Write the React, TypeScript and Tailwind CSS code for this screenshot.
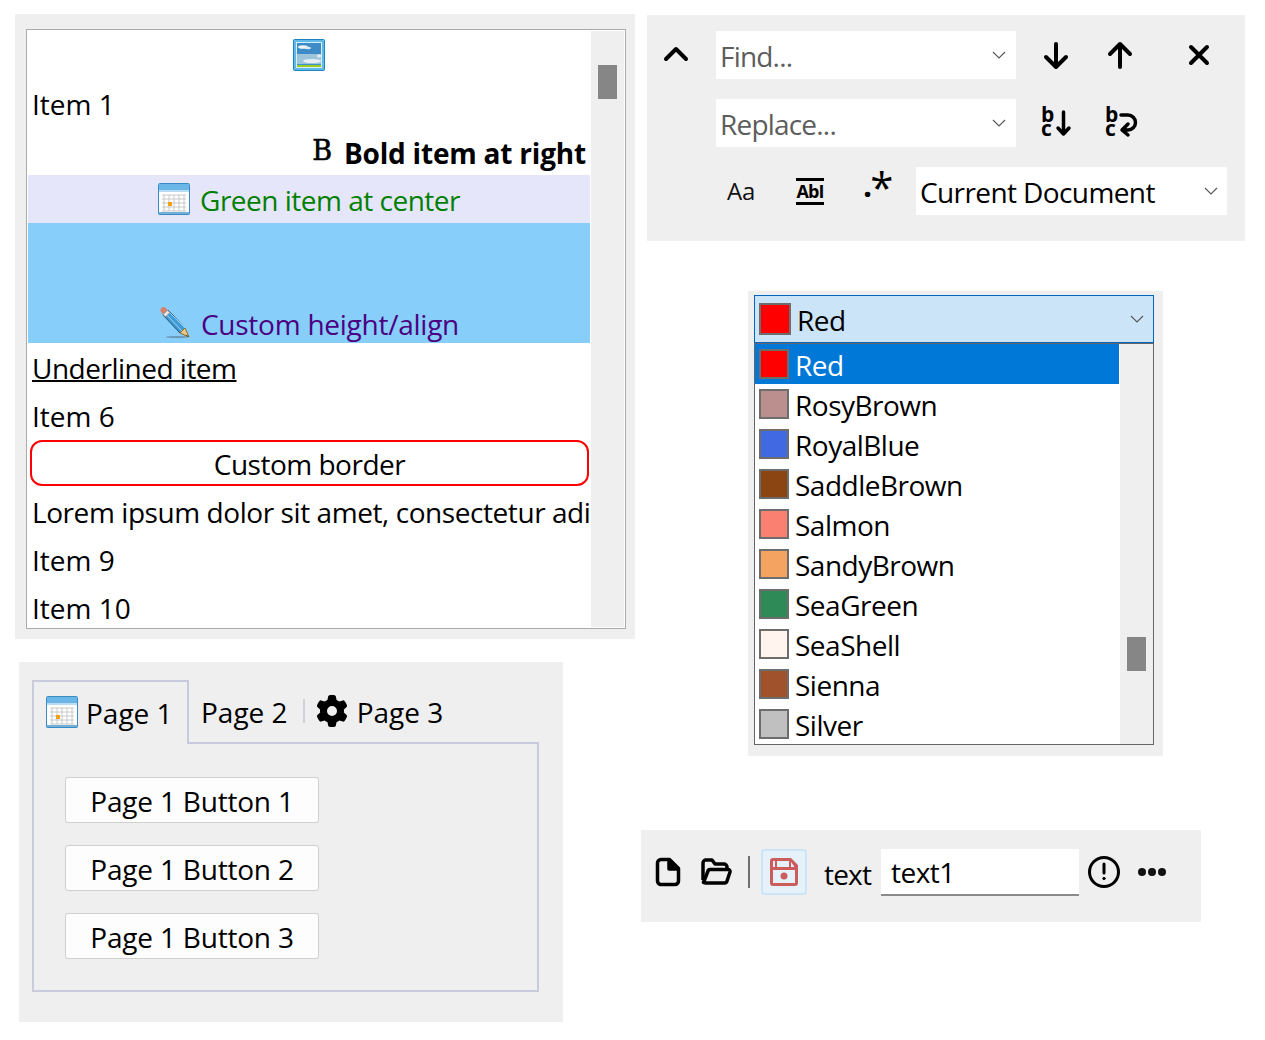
import { FaGear } from "react-icons/fa6";

const font = "[font-family:'Open_Sans','Noto_Sans',sans-serif]";

function Chevron({ className = "" }: { className?: string }) {
  return (
    <svg width="14" height="8" viewBox="0 0 14 8" fill="none" stroke="#555" strokeWidth="1.1" className={className}>
      <path d="M1 1l6 6 6-6" />
    </svg>
  );
}

function SkyIcon() {
  return (
    <svg width="32" height="32" viewBox="0 0 32 32">
      <rect x="0.5" y="0.5" width="31" height="31" rx="1" fill="#62b8e6" stroke="#1c84c0" />
      <rect x="3.500" y="3.500" width="25" height="25" fill="#3f94d0" stroke="#d6eef9" />
      <rect x="4" y="4" width="24" height="11" fill="#3d8cc8" />
      <rect x="4" y="15" width="24" height="10" fill="#9ec4dc" />
      <ellipse cx="10" cy="8" rx="5" ry="1.800" fill="#eef5f9" />
      <ellipse cx="15" cy="9" rx="3" ry="1.200" fill="#d8e8f2" />
      <ellipse cx="19" cy="22" rx="9" ry="2" fill="#e6eef3" />
      <ellipse cx="26" cy="17" rx="2" ry="1.500" fill="#e6eef3" />
      <rect x="4" y="26" width="24" height="2" fill="#9ccc1c" />
    </svg>
  );
}

function CalendarIcon() {
  return (
    <svg width="32" height="32" viewBox="0 0 32 32">
      <rect x="0.5" y="0.5" width="31" height="31" rx="1" fill="#fff" stroke="#3a8cc4" />
      <rect x="1" y="1" width="30" height="6" fill="#6ab6e6" />
      <rect x="1" y="7" width="30" height="2" fill="#b8dcf2" />
      <path d="M4 12h24M4 16h24M4 20h24M4 24h24M4 28h24M6 12v16M11 12v16M16 12v16M21 12v16M26 12v16" stroke="#c8c8c8" strokeWidth="1" />
      <rect x="10" y="19" width="4" height="4" fill="#f0a010" />
      <rect x="0.5" y="29" width="31" height="2.500" fill="#3a8cc4" opacity="0.7" />
    </svg>
  );
}

function PencilIcon() {
  return (
    <svg width="32" height="32" viewBox="0 0 32 32" className="mb-[5px]">
      <ellipse cx="18" cy="31" rx="11" ry="1" fill="#5d7f98" opacity="0.7" />
      <path d="M4 9l5-5 17 18-5 5z" fill="#3f9bd8" stroke="#24516f" strokeWidth="1" />
      <path d="M8 9l15 16M11 7l15 15" stroke="#9fd4f4" strokeWidth="1" />
      <path d="M21 27l5-5 4 9z" fill="#eec788" stroke="#8a6a30" strokeWidth="1" />
      <path d="M28 29l1.500 1.800-2.500-.800z" fill="#333" />
      <path d="M2.500 6.500a3 3 0 0 1 4-4.500l2 2-4.500 4.500z" fill="#d98068" />
      <path d="M4 8.500l4.500-4.500 2.500 2.500-4.500 4.500z" fill="#e8e8e8" stroke="#777" strokeWidth="0.7" />
    </svg>
  );
}

function ToolbarGlyph({ d }: { d: string }) {
  return (
    <svg width="32" height="32" viewBox="0 0 32 32" fill="none" stroke="#000" strokeWidth="4" strokeLinecap="round" strokeLinejoin="round">
      <path d={d} />
    </svg>
  );
}

function BcGlyph({ d }: { d: string }) {
  return (
    <div className="relative w-8 h-8 tracking-normal">
      <span className="absolute left-[1px] top-0 text-[21px] leading-[14px] font-bold">b</span>
      <span className="absolute left-[1px] top-[14px] text-[21px] leading-[14px] font-bold">c</span>
      <svg className="absolute inset-0 overflow-visible" width="32" height="32" viewBox="0 0 32 32" fill="none" stroke="#000" strokeWidth="3.500" strokeLinecap="round" strokeLinejoin="round">
        <path d={d} />
      </svg>
    </div>
  );
}

function ListRow({ className = "", children }: { className?: string; children: React.ReactNode }) {
  return <div className={`h-12 shrink-0 whitespace-nowrap overflow-hidden flex items-center pl-1 pt-[2px] ${className}`}>{children}</div>;
}

function ListPanel() {
  return (
    <div className="w-[620px] h-[625px] bg-[#efefef] pt-[15px] pl-[11px]">
      <div className="w-[600px] h-[600px] border border-[#ababab] bg-white p-px flex overflow-hidden">
        <div className="w-[562px] shrink-0 flex flex-col overflow-hidden">
          <ListRow className="justify-center !pl-0 !pt-0 pb-[1px]">
            <SkyIcon />
          </ListRow>
          <ListRow className="tracking-normal">Item 1</ListRow>
          <ListRow className="justify-end font-bold pr-1 !pt-0 tracking-[-0.2px]">
            <span className="font-normal text-[27px] mr-[12px] [font-family:'DejaVu_Serif',serif] [-webkit-text-stroke:0.6px_black]">B</span>
            <span className="mt-1">Bold item at right</span>
          </ListRow>
          <ListRow className="justify-center gap-[10px] bg-[#e6e6fa] text-[#008000] !pl-0 !pt-0">
            <CalendarIcon />
            <span className="mt-[2px]">Green item at center</span>
          </ListRow>
          <div className="h-[120px] shrink-0 bg-[#87cefa] text-[#4b0082] flex items-end justify-center gap-[10px] leading-[38px] tracking-[-0.25px]">
            <PencilIcon />
            <span>Custom height/align</span>
          </div>
          <ListRow className="underline decoration-2">Underlined item</ListRow>
          <ListRow className="tracking-normal">Item 6</ListRow>
          <div className="h-12 shrink-0 p-[1px_1px_1px_2px]">
            <div className="h-full w-[559px] border-2 border-[#ff0000] rounded-[12px] flex items-center justify-center pt-[2px]">Custom border</div>
          </div>
          <ListRow className="tracking-[-0.43px]">Lorem ipsum dolor sit amet, consectetur adipiscing elit, sed do eiusmod</ListRow>
          <ListRow className="tracking-normal">Item 9</ListRow>
          <ListRow className="tracking-normal">Item 10</ListRow>
        </div>
        <div className="flex-1 bg-[#efefef] ml-px pt-[34px] pl-[7px]">
          <div className="w-[19px] h-[34px] bg-[#868686]" />
        </div>
      </div>
    </div>
  );
}

function TabsPanel() {
  return (
    <div className="ml-1 w-[544px] h-[360px] bg-[#efefef] pt-[18px] px-[13px] tracking-normal">
      <div className="flex h-16 items-start">
        <div className="w-[157px] h-16 border-2 border-b-0 border-[#c9cbdd] bg-[#efefef] flex items-center gap-2 pl-3 pb-[3px] relative z-10">
          <CalendarIcon />
          <span className="mt-[2px]">Page 1</span>
        </div>
        <div className="flex-1 mr-[24px] h-16 flex items-center pl-3 pb-[3px]">
          <span className="mt-[2px]">Page 2</span>
          <div className="w-[2px] h-6 bg-[#d0d0d8] ml-[15px] mr-[13px]" />
          <FaGear size={32} className="mr-[9px] -ml-[2px]" />
          <span className="mt-[2px]">Page 3</span>
        </div>
      </div>
      <div className="w-[507px] h-[250px] mt-[-2px] border-2 border-[#c9cbdd] pl-[31px] pt-[33px] flex flex-col gap-[22px] tracking-[-0.2px]">
        {["Page 1 Button 1", "Page 1 Button 2", "Page 1 Button 3"].map((label) => (
          <div key={label} className="w-[254px] h-[46px] bg-[#fdfdfd] border border-[#d0d0d0] rounded-[3px] flex items-center justify-center pt-[2px]">
            {label}
          </div>
        ))}
      </div>
    </div>
  );
}

function FindCombo({ label, className = "" }: { label: string; className?: string }) {
  return (
    <div className={`w-[300px] h-12 bg-white flex items-center justify-between pl-1 pr-[10px] text-[#5d5d5d] tracking-[-0.8px] ${className}`}>
      <span className="mt-[2px]">{label}</span>
      <Chevron />
    </div>
  );
}

function FindPanel() {
  return (
    <div className="ml-[6px] w-[598px] h-[226px] bg-[#efefef] pt-4 pl-[13px] flex flex-col gap-5">
      <div className="flex items-center h-12">
        <div className="w-14 flex pb-1">
          <ToolbarGlyph d="M6 22L16 12l10 10" />
        </div>
        <FindCombo label="Find..." />
        <div className="ml-6 flex gap-8 items-center">
          <ToolbarGlyph d="M16 5v23M6 18l10 10 10-10" />
          <ToolbarGlyph d="M16 28V5M6 15L16 5l10 10" />
          <div className="ml-[15px]">
            <ToolbarGlyph d="M8 8l16 16M24 8L8 24" />
          </div>
        </div>
      </div>
      <div className="flex items-center h-12">
        <div className="w-14" />
        <FindCombo label="Replace..." />
        <div className="ml-6 flex gap-8 items-center">
          <BcGlyph d="M23.500 5v22M18 21l5.500 6 5.500-6" />
          <BcGlyph d="M17 8h7a7.500 7.500 0 0 1 0 15h-4M24 17l-6 6 6 5" />
        </div>
      </div>
      <div className="flex items-center h-12">
        <div className="w-[56px]" />
        <div className="w-[70px] text-[24px] pl-[11px] text-[#111] tracking-[-0.3px]">Aa</div>
        <div className="w-[66px] flex flex-col items-start pl-[10px]">
          <div className="w-[28px] border-y-[3px] border-black text-[18px] leading-[21px] font-bold text-center tracking-tighter">AbI</div>
        </div>
        <div className="w-[64px] flex items-start pl-[11px] tracking-normal">
          <span className="text-[32px] leading-none font-bold mt-[-5px]">.</span>
          <span className="text-[42px] leading-none mt-[-8px] -ml-[2px]">*</span>
        </div>
        <div className="w-[311px] h-12 bg-white flex items-center justify-between pl-1 pr-[9px] tracking-[-0.6px]">
          <span className="mt-[2px]">Current Document</span>
          <Chevron />
        </div>
      </div>
    </div>
  );
}

const colors: [string, string][] = [
  ["RosyBrown", "#bc8f8f"],
  ["RoyalBlue", "#4169e1"],
  ["SaddleBrown", "#8b4513"],
  ["Salmon", "#fa8072"],
  ["SandyBrown", "#f4a460"],
  ["SeaGreen", "#2e8b57"],
  ["SeaShell", "#fff5ee"],
  ["Sienna", "#a0522d"],
  ["Silver", "#c0c0c0"],
];

function ColorRow({ name, color, selected }: { name: string; color: string; selected?: boolean }) {
  return (
    <div className={`h-10 flex items-center pl-1 gap-[6px] overflow-hidden ${selected ? "bg-[#0078d7] text-white" : ""}`}>
      <div className="w-[30px] h-[30px] border-2 border-[#6d6d6d]" style={{ backgroundColor: color }} />
      <span className="mt-[2px] leading-[38px]">{name}</span>
    </div>
  );
}

function ColorPanel() {
  return (
    <div className="ml-[107px] mt-[50px] w-[415px] h-[465px] bg-[#efefef] pt-1 pl-[6px]">
      <div className="w-[400px] h-12 bg-[#cce4f7] border border-[#0067c0] flex items-center pl-1 pr-[9px]">
        <div className="w-8 h-8 border-2 border-[#6d6d6d] bg-[#ff0000]" />
        <span className="ml-[6px] flex-1 mt-[2px]">Red</span>
        <Chevron />
      </div>
      <div className="w-[400px] h-[402px] border border-[#666] bg-white flex overflow-hidden">
        <div className="w-[364px] shrink-0">
          <ColorRow name="Red" color="#ff0000" selected />
          {colors.map(([name, color]) => (
            <ColorRow key={name} name={name} color={color} />
          ))}
        </div>
        <div className="flex-1 ml-px bg-[#efefef] pt-[293px] pl-[7px]">
          <div className="w-[19px] h-[34px] bg-[#868686]" />
        </div>
      </div>
    </div>
  );
}

function ToolbarPanel() {
  return (
    <div className="mt-[74px] w-[560px] h-[92px] bg-[#efefef] flex items-start pt-[19px] pl-[10px]">
      <div className="w-8 h-[46px] flex items-center">
        <svg width="32" height="32" viewBox="0 0 32 32" fill="none" stroke="#000" strokeWidth="3.500" strokeLinejoin="round">
          <path d="M10 3.500h8.500l9 9V25a3.500 3.500 0 0 1-3.500 3.500H10A3.500 3.500 0 0 1 6.500 25V7A3.500 3.500 0 0 1 10 3.500z" />
          <path d="M18 4v9h9z" fill="#000" />
        </svg>
      </div>
      <div className="w-8 h-[46px] ml-[17px] flex items-center">
        <svg width="32" height="32" viewBox="0 0 32 32" fill="none" stroke="#000" strokeWidth="3.500" strokeLinejoin="round">
          <path d="M3 24V7a3 3 0 0 1 3-3h6l3 4h9a3 3 0 0 1 3 3v2" />
          <path d="M3.500 26.500L8 15a2 2 0 0 1 2-1.500h18a2 2 0 0 1 2 2.500l-3 9a2.500 2.500 0 0 1-2.500 2H6a2.500 2.500 0 0 1-2.500-1.500z" />
        </svg>
      </div>
      <div className="w-[2px] h-8 mt-[7px] bg-[#707070] ml-4 mr-[11px]" />
      <div className="w-[46px] h-[46px] bg-[#e5f1fb] border-2 border-[#cce4f7] rounded-[4px] flex items-center justify-center">
        <svg width="28" height="28" viewBox="0 0 28 28">
          <path fillRule="evenodd" fill="#cd5c5c" d="M3 0h18l7 7v18a3 3 0 0 1-3 3H3a3 3 0 0 1-3-3V3a3 3 0 0 1 3-3zM7 3v6h12V3zM3 12v13h22V12z M3 3v6h2V3zM21 3v6h3v-1l-3-4z" />
          <circle cx="14" cy="18" r="3.500" fill="#cd5c5c" />
        </svg>
      </div>
      <span className="ml-[17px] mt-[2px] leading-[46px] w-[48px] tracking-[-0.8px]">text</span>
      <div className="ml-[9px] w-[198px] h-[47px] bg-white border-b-2 border-[#8a8a8a] pl-[10px] flex items-center">text1</div>
      <div className="ml-[9px] h-[46px] flex items-center">
        <svg width="32" height="32" viewBox="0 0 32 32" fill="none" stroke="#000" strokeWidth="3" strokeLinecap="round">
          <circle cx="16" cy="16" r="14.500" />
          <path d="M16 8v9" />
          <circle cx="16" cy="22.500" r="1.200" fill="#000" strokeWidth="1" />
        </svg>
      </div>
      <div className="ml-[18px] h-[46px] flex items-center gap-[2px]">
        <span className="w-2 h-2 rounded-full bg-[#111]" />
        <span className="w-2 h-2 rounded-full bg-[#111]" />
        <span className="w-2 h-2 rounded-full bg-[#111]" />
      </div>
    </div>
  );
}

export default function App() {
  return (
    <div className={`w-[1265px] h-[1040px] bg-white text-black text-[28px] tracking-[-0.5px] flex overflow-hidden ${font}`}>
      <div className="w-[641px] shrink-0 pt-[14px] pl-[15px] flex flex-col gap-[23px]">
        <ListPanel />
        <TabsPanel />
      </div>
      <div className="flex-1 pt-[15px] flex flex-col">
        <FindPanel />
        <ColorPanel />
        <ToolbarPanel />
      </div>
    </div>
  );
}
